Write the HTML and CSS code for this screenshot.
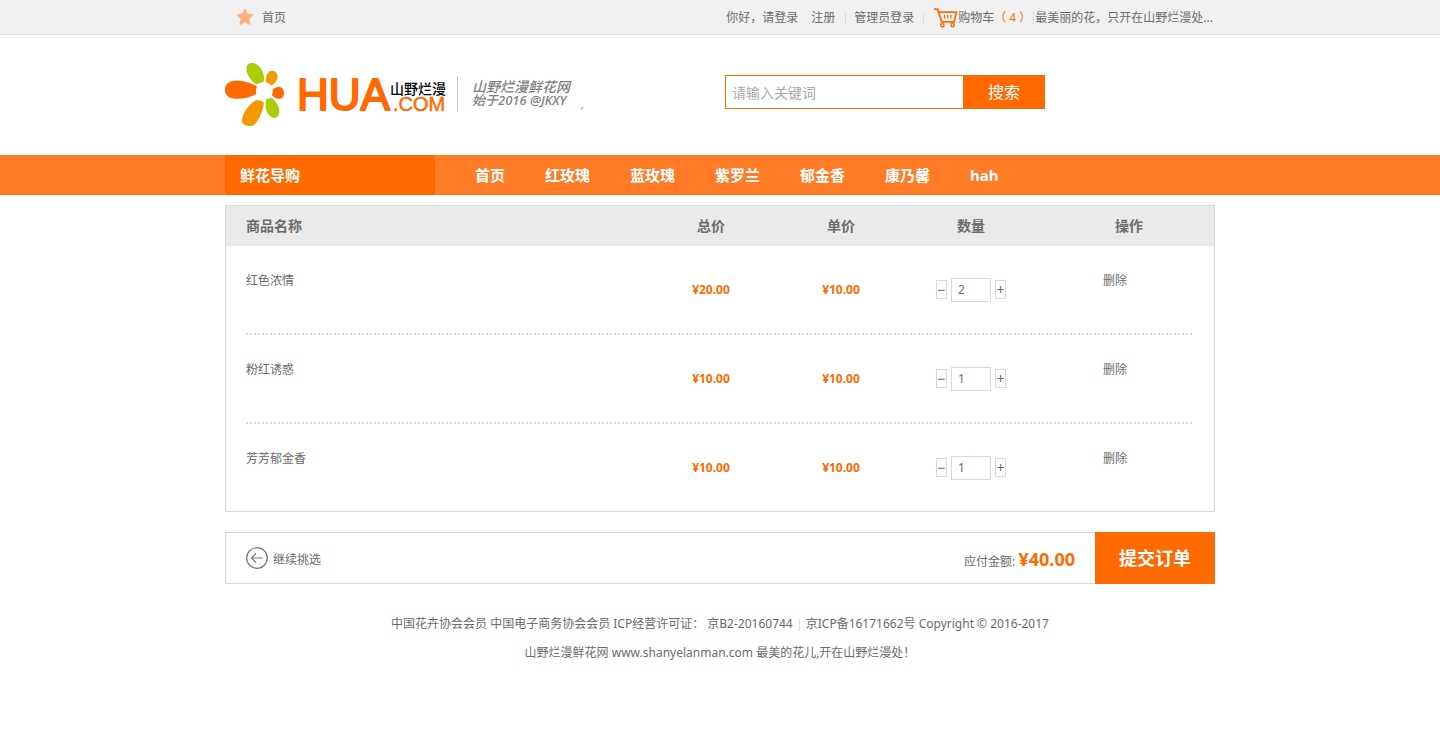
FILE: index.html
```html
<!DOCTYPE html>
<html lang="zh-CN">
<head>
<meta charset="utf-8">
<title>购物车 - 山野烂漫鲜花网</title>
<link rel="stylesheet" href="styles.css">
</head>
<body>
<div class="topbar">
  <div class="container topbar-inner">
    <a class="home" href="#">
      <svg width="18" height="18" viewBox="0 0 18 18" aria-hidden="true"><path d="M9 1.2l2.3 5 5.3.6-3.9 3.8 1 5.6L9 13.600l-4.700 2.600 1-5.600L1.400 6.800l5.300-.6z" fill="#ffb27d" stroke="#ffb27d" stroke-width="1.4" stroke-linejoin="round"/></svg>
      <span>首页</span>
    </a>
    <div class="toplinks">
      <a class="login" href="#">你好，请登录</a>
      <a class="register" href="#">注册</a>
      <a class="admin" href="#">管理员登录</a>
      <a class="cart-link" href="#">
        <svg width="24" height="20" viewBox="0 0 24 20" fill="none" stroke="#ff6a00" stroke-width="1.7" aria-hidden="true"><path d="M0 1.200h3.600l4.200 12.600h12.400l2.200-9.600H5"/><path d="M10.500 7v3.400M13.700 7v3.400M16.900 7v3.400" stroke-width="1.300"/><circle cx="8.400" cy="17.200" r="1.600" stroke-width="1.500"/><circle cx="18.600" cy="17.200" r="1.600" stroke-width="1.500"/></svg>
        <span>购物车<span class="count">（ 4 ）</span></span>
      </a>
      <span class="slogan">最美丽的花，只开在山野烂漫处...</span>
    </div>
  </div>
</div>

<header class="container header">
  <a class="logo" href="#" aria-label="山野烂漫鲜花网">
    <svg width="360" height="70" viewBox="0 0 360 70">
      <path fill="#aacd06" d="M32 24.500C26 22 21.500 14 21.400 8.500 21.400 4.500 24.500 2.700 28 3c6.500.8 12 9.500 11.200 18.500C36.500 22 34 23 32 24.500z"/>
      <path fill="#f39800" d="M41 22.500c-1-5 1.500-11.800 6-11.800 4 0 6 3.300 5.500 7-.5 3.600-3.500 6.800-6.500 7.800-1-2-3-2.800-5-3z"/>
      <path fill="#ff6a00" d="M47.500 29.500c2-2 5.500-3 8-2.300 2.500.8 3.500 3 3.500 5.800 0 3-1.300 5.300-4 5.700-3 .4-6-1.200-8.300-3.700 1.200-1.500 1.500-3.500.8-5.500z"/>
      <path fill="#aacd06" d="M46 37.500c4 2.500 7.500 7 8.200 12 .6 4.500-1 8-4.200 8.400-5 .5-9.500-6-9.500-12.400 0-2.300.2-4.500.8-6.500 2 0 3.500-.5 4.700-1.500z"/>
      <path fill="#f39800" d="M31.500 40c2 .2 5.500 1 7.300 2.300-.2 7.500-4.800 18.200-9.300 22.200-3.500 2.600-9 1.700-11.500-1-2-2.500-.8-6.500 1-10 2.500-5 7-11 12.500-13.500z"/>
      <path fill="#ff6a00" d="M32 26.500c-1 2-1.500 4.800-.7 7.200C25 37.500 16 39.200 9.500 38.700 3.500 38.200 0 34.700 0 30c0-5.500 4-9 10-9.200 7.500-.3 16.500 2 22 5.700z"/>
      <text class="logo-hua" x="72" y="50">HUA</text>
      <text class="logo-cn" x="165" y="34">山野烂漫</text>
      <text class="logo-com" x="168" y="51">.COM</text>
      <path d="M232.500 16v36" stroke="#ccc"/>
      <text class="tag-main" x="247" y="32">山野烂漫鲜花网</text>
      <text class="tag-sub" x="247" y="45">始于2016 @JKXY</text>
      <path d="M355.500 49.500l3-2.500" stroke="#888"/>
    </svg>
  </a>
  <form class="search">
    <input type="text" placeholder="请输入关键词" aria-label="关键词">
    <button type="button">搜索</button>
  </form>
</header>

<nav class="nav">
  <div class="container nav-inner">
    <a class="guide" href="#">鲜花导购</a>
    <div class="menu">
      <a href="#">首页</a>
      <a href="#">红玫瑰</a>
      <a href="#">蓝玫瑰</a>
      <a href="#">紫罗兰</a>
      <a href="#">郁金香</a>
      <a href="#">康乃馨</a>
      <a href="#">hah</a>
    </div>
  </div>
</nav>

<main class="container">
  <div class="cart">
    <table>
      <thead>
        <tr><th class="name">商品名称</th><th class="num">总价</th><th class="num">单价</th><th class="num">数量</th><th class="op">操作</th></tr>
      </thead>
      <tbody>
        <tr>
          <td class="name">红色浓情</td><td class="price">¥20.00</td><td class="price">¥10.00</td>
          <td><div class="qty"><button type="button" aria-label="减少">−</button><input type="text" value="2" aria-label="红色浓情数量"><button type="button" aria-label="增加">+</button></div></td>
          <td class="op"><a href="#">删除</a></td>
        </tr>
        <tr>
          <td class="name">粉红诱惑</td><td class="price">¥10.00</td><td class="price">¥10.00</td>
          <td><div class="qty"><button type="button" aria-label="减少">−</button><input type="text" value="1" aria-label="粉红诱惑数量"><button type="button" aria-label="增加">+</button></div></td>
          <td class="op"><a href="#">删除</a></td>
        </tr>
        <tr>
          <td class="name">芳芳郁金香</td><td class="price">¥10.00</td><td class="price">¥10.00</td>
          <td><div class="qty"><button type="button" aria-label="减少">−</button><input type="text" value="1" aria-label="芳芳郁金香数量"><button type="button" aria-label="增加">+</button></div></td>
          <td class="op"><a href="#">删除</a></td>
        </tr>
      </tbody>
    </table>
  </div>

  <div class="checkout">
    <div class="summary">
      <a class="back" href="#">
        <svg width="22" height="22" viewBox="0 0 22 22" fill="none" stroke="#777" stroke-width="1.200" aria-hidden="true"><circle cx="11" cy="11" r="10.300"/><path d="M16.500 11H6M10 6.500L5.500 11l4.500 4.500"/></svg>
        <span>继续挑选</span>
      </a>
      <div class="total">应付金额: <strong>¥40.00</strong></div>
    </div>
    <button class="submit" type="button">提交订单</button>
  </div>
</main>

<footer class="container footer">
  <p>中国花卉协会会员 中国电子商务协会会员 ICP经营许可证： 京B2-20160744<span class="bar"></span>京ICP备16171662号 Copyright © 2016-2017</p>
  <p>山野烂漫鲜花网 www.shanyelanman.com 最美的花儿,开在山野烂漫处！</p>
</footer>
</body>
</html>
```

FILE: styles.css
```css
* { box-sizing: border-box; }

body {
  margin: 0;
  background: #fff;
  color: #6b6b6b;
  font: 12px/18px "Noto Sans", "Noto Sans CJK SC", sans-serif;
}

a { color: inherit; text-decoration: none; }
button, input { font: inherit; color: inherit; margin: 0; border-radius: 0; }
button { cursor: pointer; }
svg { display: block; flex: none; }

.container { max-width: 990px; margin: 0 auto; }

/* top bar */
.topbar { background: #f1f1f1; border-bottom: 1px solid #e4e4e4; }
.topbar-inner { display: flex; justify-content: space-between; height: 34px; align-items: center; padding-left: 11px; }
.home { display: flex; align-items: center; gap: 8px; }
.home span { padding-top: 2px; }
.toplinks { display: flex; align-items: center; line-height: 12px; padding-top: 2px; }
.register { margin-left: 13px; padding-right: 10px; }
.admin { border-left: 1px solid #ddd; padding: 0 9px 0 8px; }
.cart-link { display: flex; align-items: center; border-left: 1px solid #ddd; padding: 0 2px 0 10px; height: 12px; }
.count { color: #ff6a00; }
.slogan { border-left: 1px solid #ddd; padding: 0 2px 0 1px; }

/* header */
.header { display: flex; height: 120px; padding-top: 25px; }
.logo { flex: 0 0 500px; }
.logo-hua { font: 44px "Liberation Sans", sans-serif; fill: #ff6a00; stroke: #ff6a00; stroke-width: 2; stroke-linejoin: round; }
.logo-com { font: 20px "Liberation Sans", sans-serif; fill: #ff6a00; stroke: #ff6a00; stroke-width: 0.5; }
.logo-cn { font: 500 14px "Noto Sans CJK SC", sans-serif; fill: #000; }
.tag-main { font: italic 500 14px "Noto Sans CJK SC", sans-serif; fill: #808080; }
.tag-sub { font: italic 500 13px "Noto Sans", "Noto Sans CJK SC", sans-serif; fill: #808080; }
.search { display: flex; width: 320px; height: 34px; margin-top: 15px; }
.search input { flex: 1; min-width: 0; border: 1px solid #ff6a00; border-right: 0; padding: 1px 6px 0; font-size: 14px; background: #fff; }
.search input::placeholder { color: #aaa; opacity: 1; }
.search button { width: 82px; border: 0; padding: 0; background: #ff6a00; color: #fff; font-size: 16px; }

/* navigation */
.nav { background: #ff7b26; color: #fff; font-size: 15px; font-weight: bold; line-height: 40px; }
.nav-inner { display: flex; }
.guide { width: 210px; padding-left: 15px; background: #ff6a00; }
.menu { display: flex; gap: 40px; padding-left: 40px; }

/* cart table */
.cart { margin-top: 10px; padding: 0 20px; border: 1px solid #d9d9d9; background: linear-gradient(#eaeaea 40px, #fff 40px); }
.cart table { width: 100%; border-spacing: 0; table-layout: fixed; }
.cart th { height: 40px; padding: 0; font-size: 14px; text-align: center; }
.cart th.name { text-align: left; }
.cart th.num { width: 130px; }
.cart th.op { width: 158px; padding-left: 28px; }
.cart td { height: 89px; padding: 0 0 2px; text-align: center; }
.cart tbody tr { background: repeating-linear-gradient(90deg, #d9d9d9 0 2px, transparent 2px 4px) left bottom / 100% 2px no-repeat; }
.cart tbody tr:last-child { background: none; }
.cart tr:last-child td { height: 87px; padding-bottom: 0; }
.cart tbody td.name, .cart tbody td.op { vertical-align: top; padding-top: 26px; }
.cart td.name { text-align: left; }
.price { color: #ff6a00; font-weight: bold; }
.qty { display: flex; justify-content: center; align-items: center; gap: 4px; }
.qty button { width: 11px; height: 19px; padding: 0; border: 1px solid #d9d9d9; background: #fff; font-size: 14px; line-height: 16px; display: flex; justify-content: center; align-items: center; }
.qty input { width: 40px; height: 24px; padding: 0 6px; border: 1px solid #d9d9d9; background: #fff; }

/* checkout */
.checkout { display: flex; height: 52px; margin-top: 20px; }
.summary { flex: 1; display: flex; justify-content: space-between; align-items: center; padding: 0 20px; border: 1px solid #d9d9d9; border-right: 0; }
.back { display: flex; align-items: center; gap: 5px; }
.back span { padding-top: 4px; }
.total { padding-top: 4px; }
.total strong { color: #ff6a00; font-size: 18px; }
.submit { width: 120px; padding: 0; border: 0; background: #ff6a00; color: #fff; font-size: 18px; font-weight: bold; }

/* footer */
.footer { padding-top: 25px; text-align: center; line-height: 29px; }
.footer p { margin: 0; }
.bar { display: inline-block; width: 1px; height: 12px; margin: 0 6px; background: #ddd; vertical-align: middle; }
```
